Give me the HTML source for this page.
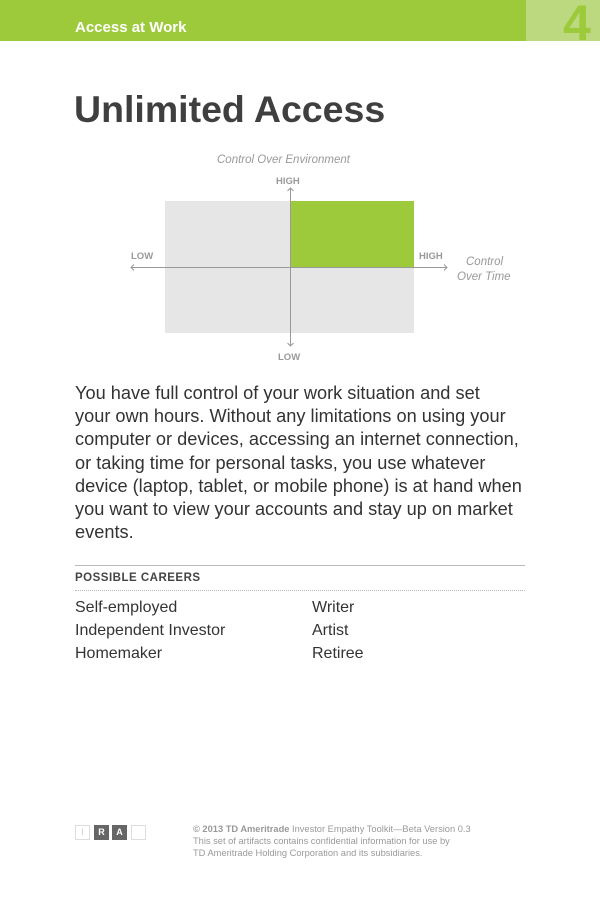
<!DOCTYPE html>
<html><head><style>
body{margin:0;width:600px;height:901px;background:#fff;font-family:"Liberation Sans",sans-serif;position:relative;overflow:hidden}
.a{position:absolute;white-space:nowrap}
</style></head><body>
<div class="a" style="left:0;top:0;width:526px;height:41px;background:#9dca3a"></div>
<div class="a" style="left:526px;top:0;width:74px;height:41px;background:#bcd97f"></div>
<div class="a" style="left:75px;top:19px;font-size:15px;font-weight:bold;color:#fff">Access at Work</div>
<div class="a" style="left:563px;top:-2px;font-size:50px;font-weight:bold;color:#9dca3a;line-height:50px">4</div>
<div class="a" style="left:74px;top:88px;font-size:37.5px;font-weight:bold;color:#3f3f3f">Unlimited Access</div>
<svg class="a" style="left:0;top:0" width="600" height="380">
<rect x="165" y="201" width="249" height="132" fill="#e6e6e7"/>
<rect x="290" y="201" width="124" height="66" fill="#9dca3a"/>
<g stroke="#999" stroke-width="1" fill="none">
<line x1="131" y1="267.5" x2="447" y2="267.5"/>
<line x1="290.5" y1="188" x2="290.5" y2="346"/>
<polyline points="134,264.5 131,267.5 134,270.5"/>
<polyline points="444,264.5 447,267.5 444,270.5"/>
<polyline points="287.5,191 290.5,188 293.5,191"/>
<polyline points="287.5,343 290.5,346 293.5,343"/>
</g>
<g font-family="Liberation Sans" fill="#999">
<text x="217" y="163" font-size="11.5" font-style="italic">Control Over Environment</text>
<text x="276" y="184" font-size="9.5" font-weight="bold">HIGH</text>
<text x="278" y="360" font-size="9.5" font-weight="bold">LOW</text>
<text x="131" y="259" font-size="9.5" font-weight="bold">LOW</text>
<text x="419" y="259" font-size="9.5" font-weight="bold">HIGH</text>
<text x="466" y="265" font-size="11.5" font-style="italic">Control</text>
<text x="457" y="280" font-size="11.5" font-style="italic">Over Time</text>
</g>
</svg>
<div class="a" style="left:75px;top:382px;font-size:18.2px;line-height:23.2px;color:#333">You have full control of your work situation and set<br>your own hours. Without any limitations on using your<br>computer or devices, accessing an internet connection,<br>or taking time for personal tasks, you use whatever<br>device (laptop, tablet, or mobile phone) is at hand when<br>you want to view your accounts and stay up on market<br>events.</div>
<div class="a" style="left:75px;top:565px;width:450px;border-top:1px solid #bbb"></div>
<div class="a" style="left:75px;top:572px;font-size:11.5px;font-weight:bold;color:#444;letter-spacing:.5px">POSSIBLE CAREERS</div>
<div class="a" style="left:75px;top:590px;width:450px;border-top:1px dotted #bbb"></div>
<div class="a" style="left:75px;top:596px;font-size:16px;line-height:23px;color:#333">Self-employed<br>Independent Investor<br>Homemaker</div>
<div class="a" style="left:312px;top:596px;font-size:16px;line-height:23px;color:#333">Writer<br>Artist<br>Retiree</div>
<div class="a" style="left:75px;top:825px;width:13px;height:13px;border:1px solid #ddd;font-size:9px;color:#ccc;text-align:center;line-height:13px">I</div>
<div class="a" style="left:94px;top:825px;width:15px;height:15px;background:#666;font-size:9px;font-weight:bold;color:#fff;text-align:center;line-height:15px">R</div>
<div class="a" style="left:112px;top:825px;width:15px;height:15px;background:#666;font-size:9px;font-weight:bold;color:#fff;text-align:center;line-height:15px">A</div>
<div class="a" style="left:131px;top:825px;width:13px;height:13px;border:1px solid #ddd"></div>
<div class="a" style="left:193px;top:823px;font-size:9.3px;line-height:12px;color:#999"><b>© 2013 TD Ameritrade</b> Investor Empathy Toolkit—Beta Version 0.3<br>This set of artifacts contains confidential information for use by<br>TD Ameritrade Holding Corporation and its subsidiaries.</div>
</body></html>
